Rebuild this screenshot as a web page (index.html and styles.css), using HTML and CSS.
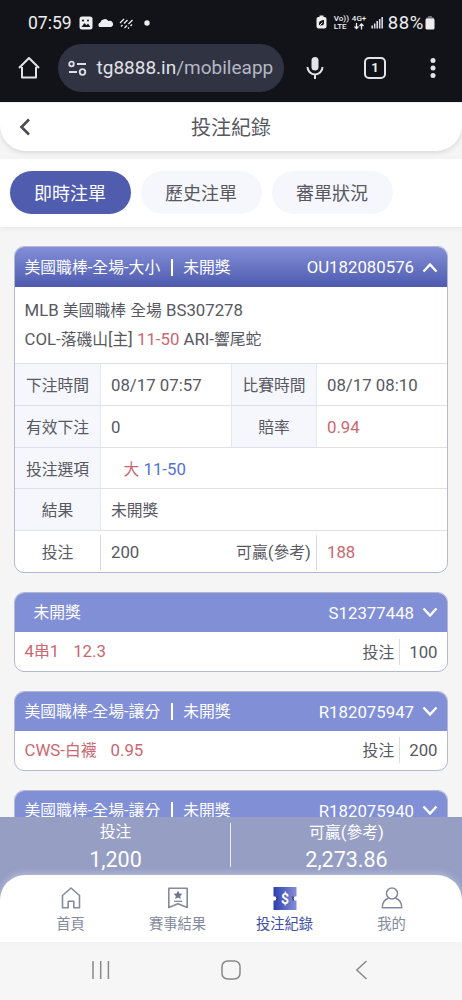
FILE: index.html
```html
<!DOCTYPE html>
<html lang="zh-Hant">
<head>
<meta charset="utf-8">
<title>投注紀錄</title>
<link rel="stylesheet" href="styles.css">
</head>
<body>
<div class="phone">
  <header class="chrome">
    <div class="status">
      <span class="clock">07:59</span>
      <svg class="status-left" width="74" height="16" viewBox="0 0 74 16">
        <rect x="1.5" y="1.500" width="13" height="13" rx="2.500" fill="#eeeef0"/>
        <path d="M3.500 12l3-4 2 2.200 1.500-1.600 2.400 3.400z" fill="#121318"/><circle cx="5" cy="5.500" r="1.100" fill="#121318"/><circle cx="10" cy="5.500" r="1" fill="#121318"/>
        <path d="M22.500 12.500a2.500 2.500 0 0 1 .8-4.500A4.600 4.600 0 0 1 31.500 6.500A3.200 3.200 0 0 1 34 12.500z" transform="translate(-1 -.5)" fill="#eeeef0"/>
        <path d="M42 8l4-4M43 11.500l1.500-1.500M46 8.500l3.500-3.500M46.500 13l2.500-2.500M50.500 9l4-4M50 13.500l1-1M52.500 11l1.500-1.500" stroke="#eeeef0" stroke-width="1.300"/>
        <circle cx="69" cy="8" r="2.700" fill="#eeeef0"/>
      </svg>
      <div class="status-right">
        <svg width="11" height="15" viewBox="0 0 11 15"><path d="M3.500 0.500h4v1.500h1q2 0 2 2v7.500q0 2-2 2h-6q-2 0-2-2V4q0-2 2-2h1z" fill="#eeeef0"/><path d="M3 10.500V8q0-2 2.500-2.500L8 5v3q0 2.500-3 2.500z" fill="#121318"/><path d="M2.500 11.500L6.500 7.500" stroke="#eeeef0"/></svg>
        <span class="tiny">Vo))<br>LTE</span>
        <span class="tiny tiny-4g">4G+<svg width="10" height="7" viewBox="0 0 10 7"><path d="M2.500 0v5.500M.5 3.500l2 2 2-2M7.500 6.500V1M5.500 3l2-2 2 2" fill="none" stroke="#eeeef0" stroke-width="1.300"/></svg></span>
        <svg class="signal" width="12" height="13" viewBox="0 0 12 13"><path d="M1.200 12.500V9.500M3.700 12.500V7.500M6.200 12.500V5M8.700 12.500V3M11.200 12.500V1" stroke="#d8d8dc" stroke-width="1.600"/></svg>
        <span class="percent">88%</span>
        <svg class="battery" width="10" height="14" viewBox="0 0 10 14"><path d="M3 0h4v1.500h2v2H1v-2h2z" fill="#6d6e73"/><rect x=".5" y="2.500" width="9" height="11" rx="1.500" fill="#eeeef0"/></svg>
      </div>
    </div>
    <div class="toolbar">
      <svg class="home-btn" width="22" height="24" viewBox="0 0 22 24"><path d="M4 11v10.500h14V11M1 12L11 2l10 10" fill="none" stroke="#e4e4e8" stroke-width="2" stroke-linejoin="round"/></svg>
      <div class="url">
        <svg width="20" height="16" viewBox="0 0 20 16"><g fill="none" stroke="#dcdfe8" stroke-width="1.800"><circle cx="3.500" cy="4" r="2.300"/><path d="M9 4h9M1 12h8"/><circle cx="14.500" cy="12" r="2.800"/></g></svg>
        <span>tg8888.in<span class="path">/mobileapp</span></span>
      </div>
      <svg class="mic" width="18" height="24" viewBox="0 0 18 24"><rect x="5.500" y="1" width="7" height="13.500" rx="3.500" fill="#e4e4e8"/><path d="M1.500 11a7.500 7.500 0 0 0 15 0M9 18.500V23" fill="none" stroke="#e4e4e8" stroke-width="2"/></svg>
      <span class="tabs-count">1</span>
      <svg class="dots" width="6" height="22" viewBox="0 0 6 22" fill="#e4e4e8"><circle cx="3" cy="3.500" r="2.500"/><circle cx="3" cy="11" r="2.500"/><circle cx="3" cy="18.500" r="2.500"/></svg>
    </div>
  </header>

  <div class="titlebar">
    <svg class="back" width="12" height="18" viewBox="0 0 12 18"><path d="M10 1.500L2.500 9l7.500 7.500" fill="none" stroke="#4b4b55" stroke-width="2.600"/></svg>
    <h1>投注紀錄</h1>
  </div>
  <nav class="pills">
    <span class="pill active">即時注單</span><span class="pill">歷史注單</span><span class="pill">審單狀況</span>
  </nav>

  <main class="list">
    <section class="card open">
      <div class="head"><span>美國職棒<i>-</i>全場<i>-</i>大小</span><b></b><span class="state">未開獎</span><i class="no">OU182080576</i>
        <svg width="16" height="11" viewBox="0 0 16 11"><path d="M1.500 9.500L8 2.500l6.500 7" fill="none" stroke="#fff" stroke-width="2.400"/></svg></div>
      <div class="match"><div><i>MLB </i>美國職棒<i> </i>全場<i> BS307278</i></div><div><i>COL-</i>落磯山<i>[</i>主<i>] <em>11-50</em> ARI-</i>響尾蛇</div></div>
      <div class="row"><span class="label">下注時間</span><i class="value">08/17 07:57</i><span class="label second">比賽時間</span><i class="value">08/17 08:10</i></div>
      <div class="row"><span class="label">有效下注</span><i class="value">0</i><span class="label second">賠率</span><i class="value red">0.94</i></div>
      <div class="row"><span class="label">投注選項</span><span class="value pick"><em>大</em><i class="blue"> 11-50</i></span></div>
      <div class="row"><span class="label">結果</span><span class="value result">未開獎</span></div>
      <div class="row last"><span class="label">投注</span><i class="value">200</i><span class="label second">可贏<i>(</i>參考<i>)</i></span><i class="value red">188</i></div>
    </section>
    <section class="card">
      <div class="head"><span class="state indent">未開獎</span><i class="no">S12377448</i>
        <svg width="16" height="11" viewBox="0 0 16 11"><path d="M1.500 1.500L8 8.500l6.500-7" fill="none" stroke="#fff" stroke-width="2.400"/></svg></div>
      <div class="brief"><em><i>4</i>串<i>1</i></em><em><i>12.3</i></em><span class="stake">投注</span><i class="amount">100</i></div>
    </section>
    <section class="card">
      <div class="head"><span>美國職棒<i>-</i>全場<i>-</i>讓分</span><b></b><span class="state">未開獎</span><i class="no">R182075947</i>
        <svg width="16" height="11" viewBox="0 0 16 11"><path d="M1.500 1.500L8 8.500l6.500-7" fill="none" stroke="#fff" stroke-width="2.400"/></svg></div>
      <div class="brief"><em><i>CWS-</i>白襪</em><em><i>0.95</i></em><span class="stake">投注</span><i class="amount">200</i></div>
    </section>
    <section class="card">
      <div class="head"><span>美國職棒<i>-</i>全場<i>-</i>讓分</span><b></b><span class="state">未開獎</span><i class="no">R182075940</i>
        <svg width="16" height="11" viewBox="0 0 16 11"><path d="M1.500 1.500L8 8.500l6.500-7" fill="none" stroke="#fff" stroke-width="2.400"/></svg></div>
      <div class="brief"></div>
    </section>
  </main>

  <footer class="bottom">
    <div class="summary">
      <div><span>投注</span><strong>1,200</strong></div>
      <div><span>可贏<i>(</i>參考<i>)</i></span><strong>2,273.86</strong></div>
    </div>
    <nav class="tabbar">
      <div class="tab"><svg width="24" height="24" viewBox="0 0 24 24"><path d="M3.500 9.500L12 2l8.500 7.500v12.200h-5.700v-6.500H9.200v6.500H3.500z" fill="none" stroke="#838a9d" stroke-width="1.600" stroke-linejoin="round"/></svg>首頁</div>
      <div class="tab"><svg width="24" height="24" viewBox="0 0 24 24"><path d="M2.800 2.200h18.400v19.300L12 17.800l-9.200 3.700z" fill="none" stroke="#838a9d" stroke-width="1.600" stroke-linejoin="round"/><path d="M12 4.500l1.400 2.900 3.100.4-2.300 2.200.6 3.100-2.800-1.500-2.800 1.500.6-3.100-2.300-2.200 3.100-.4z" fill="#6e7690"/><path d="M8 15.300h8" stroke="#838a9d" stroke-width="1.300"/></svg>賽事結果</div>
      <div class="tab on"><svg width="24" height="24" viewBox="0 0 24 24"><defs><linearGradient id="tk"><stop offset="0" stop-color="#2d3fb0"/><stop offset="1" stop-color="#8790d4"/></linearGradient></defs><path d="M.5 1h23v9.500h-1.500a2 2 0 0 0 0 4h1.500V24H.5v-9.500H2a2 2 0 0 0 0-4H.5z" fill="url(#tk)"/><path d="M3.500 10.500q1.500 2 0 4M20.500 10.500q-1.500 2 0 4" fill="none" stroke="#29337d" stroke-width="1.500"/><text x="12" y="17.500" text-anchor="middle" class="dollar">$</text></svg>投注紀錄</div>
      <div class="tab"><svg width="24" height="24" viewBox="0 0 24 24"><circle cx="12" cy="7.500" r="5.500" fill="none" stroke="#838a9d" stroke-width="1.500"/><path d="M8.500 12.200Q2.400 14 2.300 21.700h19.400Q21.600 14 15.500 12.200" fill="none" stroke="#838a9d" stroke-width="1.500" stroke-linejoin="round"/></svg>我的</div>
    </nav>
    <div class="sysnav">
      <svg width="20" height="20" viewBox="0 0 20 20"><path d="M2 1v18M9.700 1v18M17.400 1v18" stroke="#898989" stroke-width="1.500"/></svg>
      <svg width="20" height="20" viewBox="0 0 20 20"><rect x="1" y="1" width="18" height="18" rx="5.500" fill="none" stroke="#898989" stroke-width="1.500"/></svg>
      <svg width="20" height="20" viewBox="0 0 20 20"><path d="M15.500 1L5.800 10l9.700 9" fill="none" stroke="#898989" stroke-width="1.500"/></svg>
    </div>
  </footer>
</div>
</body>
</html>
```
FILE: styles.css
```css
* { box-sizing: border-box; }
body { margin: 0; font-family: Roboto, "Noto Sans CJK TC", sans-serif; font-size: 15.8px; line-height: 24px; color: #585862; background: #f5f5f6; }
svg { display: block; flex: none; }
i, em { font-style: normal; }
i { font-size: 16.8px; white-space: pre; }
em, .red { color: #cb6770; }
.blue { color: #5273cf; }
.phone { position: relative; height: 1000px; overflow: hidden; display: flex; flex-direction: column; }

/* browser chrome */
.chrome { height: 102px; flex: none; background: #121318; color: #eeeef0; }
.status { display: flex; align-items: center; height: 43px; padding: 2px 27px 0 28px; }
.clock { font-size: 17.5px; }
.status-left { margin-left: 6px; }
.status-right { margin-left: auto; display: flex; align-items: center; }
.tiny { margin-left: 3px; width: 14px; font-size: 8px; line-height: 7.5px; font-weight: 500; white-space: nowrap; }
.tiny-4g { margin-left: 4px; width: 15px; }
.tiny-4g svg { margin-left: 2px; }
.signal { margin-left: 4px; }
.percent { margin-left: 5px; font-size: 18.5px; letter-spacing: .6px; }
.battery { margin-left: 1px; }
.status-right > svg:first-child { margin-right: 4px; }
.toolbar { display: flex; align-items: center; height: 50px; padding-left: 18px; }
.url { display: flex; align-items: center; gap: 9px; width: 226px; height: 48px; margin-left: 18px; padding-left: 9.5px; border-radius: 24px; background: #303341; color: #e0e1e8; font-size: 19px; white-space: nowrap; }
.path { color: #b5b8c4; }
.mic { margin-left: 22px; }
.tabs-count { width: 22px; height: 22px; margin-left: 40px; border: 2px solid #e4e4e8; border-radius: 5px; font-size: 13px; font-weight: 700; line-height: 18px; text-align: center; }
.dots { margin-left: 44px; }

/* page heading */
.titlebar { display: flex; align-items: center; flex: none; height: 48px; padding: 0 20px 1px 19px; margin-top: 1px; background: #fff; border-radius: 0 0 26px 26px; box-shadow: 0 2px 5px #0000001c; }
.titlebar h1 { flex: 1; margin: 2px 11px 0 0; font-size: 20px; font-weight: 400; text-align: center; }
.pills { display: flex; align-items: center; gap: 10px; flex: none; height: 68px; margin-top: 8px; padding: 0 0 1px 9.5px; background: #fff; box-shadow: 0 2px 5px #0000000d; }
.pill { width: 121px; height: 43px; border-radius: 22px; line-height: 45px; font-size: 18px; text-align: center; background: #f6f7fd; }
.pill.active { background: #505cae; color: #fff; }

/* bet cards */
.list { display: flex; flex-direction: column; gap: 19.5px; padding: 19px 14px 0; }
.card { flex: none; border: 1px solid #b5b8d2; border-radius: 10px; overflow: hidden; background: #fff; }
.card:not(.open) { height: 79.3px; }
.head { display: flex; align-items: center; height: 40px; margin: -1px -1px 0; padding: 1px 10px 0 10.5px; background: #818fd6; color: #fff; }
.open .head { height: 41px; background: linear-gradient(#8490d8, #4e5bae); }
.head b { width: 2px; height: 17px; margin: 0 10px 0 11px; background: #fff; }
.state { padding-top: 1px; }
.indent { padding-left: 9px; }
.no { margin-left: auto; margin-right: 8px; }
.match { height: 76px; padding: 9px 9.5px 0; line-height: 28px; }
.match div { height: 28.5px; }
.row { display: flex; height: 41.8px; border-top: 1px solid #dfe0ea; line-height: 43px; }
.label { width: 86px; flex: none; text-align: center; white-space: nowrap; line-height: 44px; background: #f6f7fc; border-right: 1px solid #e5e6f0; }
.value { flex: 1; padding-left: 10px; line-height: 43px; }
.result { line-height: 44px; }
.label.second { border-left: 1px solid #e5e6f0; margin-left: -1px; }
.row .value:last-child { flex: none; width: 130px; }
.row .pick:last-child { padding-left: 22.5px; width: auto; }
.last .label { line-height: 43px; background: none; border-style: solid; border-color: transparent; border-image: linear-gradient(transparent 5px, #d5d6e2 5px, #d5d6e2 38px, transparent 38px) 1; border-width: 0 1px 0 0; }
.brief { display: flex; align-items: center; height: 38.3px; padding: 0 9.5px; }
.brief em { margin-right: 14px; }
.stake { margin-left: auto; height: 26px; padding-right: 5px; line-height: 28px; border-right: 1px solid #dadbe6; }
.amount { margin-left: 9px; }

/* fixed footer */
.bottom { position: absolute; left: 0; right: 0; bottom: 0; }
.summary { display: flex; height: 83px; margin-bottom: -25px; background: #969ec4; color: #fff; text-align: center; }
.summary div { flex: 1; padding-top: 3px; position: relative; }
.summary div + div::before { content: ""; position: absolute; left: -1px; top: 6px; width: 1px; height: 44px; background: #e9ebf5; }
.summary span, .summary strong { display: block; height: 24px; }
.summary strong { margin-top: 4px; font-size: 21.5px; font-weight: 400; }
.tabbar { position: relative; display: flex; height: 67px; padding: 11px 17px 0; background: #fff; border-radius: 25px 25px 0 0; box-shadow: 0 -2px 6px #d4d9f080; }
.tab { flex: 1; display: flex; flex-direction: column; align-items: center; gap: 2px; font-size: 14.3px; color: #838a9d; }
.tab.on { color: #4150a5; }
.dollar { font-size: 14px; font-weight: 700; fill: #fff; }
.sysnav { display: flex; justify-content: space-between; align-items: center; height: 58px; padding: 0 91px 3px; background: #f6f6f6; }
```
